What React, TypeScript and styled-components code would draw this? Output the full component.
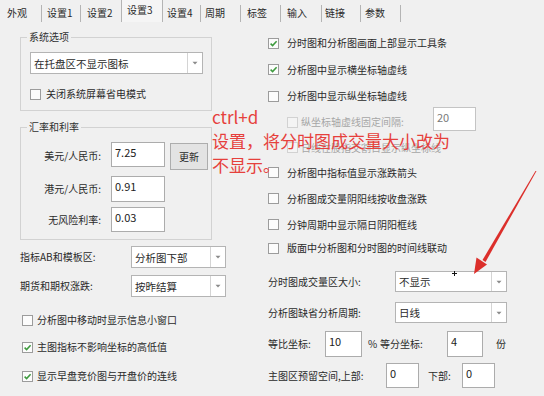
import React from 'react';
import styled, { createGlobalStyle } from 'styled-components';

const Global = createGlobalStyle`
  html, body { margin: 0; padding: 0; background: #f0f0f0; }
  body { font-family: "Noto Sans CJK SC", "Noto Sans", sans-serif; }
`;

const Page = styled.div`
  position: relative;
  width: 544px;
  height: 396px;
  overflow: hidden;
  background: #f0f0f0;
  color: #2a2a2a;
  font-size: 10px;
  font-family: "Noto Sans CJK SC", "Noto Sans", sans-serif;
`;

const TabBar = styled.div`
  display: flex;
  align-items: flex-end;
  height: 22px;
`;

const Tab = styled.div<{ $active?: boolean; $w: number; $sep?: boolean; $pl: number }>`
  box-sizing: border-box;
  width: ${p => p.$w}px;
  height: ${p => (p.$active ? 22 : 17)}px;
  padding-left: ${p => p.$pl}px;
  line-height: ${p => (p.$active ? 20 : 16)}px;
  border-right: ${p => (p.$sep === false ? 'none' : '1px solid #b4b4b4')};
  border-left: ${p => (p.$active ? '1px solid #b4b4b4' : 'none')};
  background: ${p => (p.$active ? '#f5f5f5' : 'transparent')};
  white-space: nowrap;
`;

const Body = styled.div`
  display: flex;
  gap: 42px;
`;

const LeftCol = styled.div`
  box-sizing: border-box;
  width: 226px;
  padding-left: 20px;
  display: flex;
  flex-direction: column;
`;

const RightCol = styled.div`
  flex: 1;
  display: flex;
  flex-direction: column;
`;

const Spacer = styled.div<{ $h: number }>`
  height: ${p => p.$h}px;
  flex: none;
`;

const Group = styled.fieldset<{ $mt: number; $pb: number }>`
  margin: ${p => p.$mt}px 0 0 0;
  padding: 0 0 ${p => p.$pb}px 0;
  width: 192px;
  box-sizing: border-box;
  border: 1px solid #d2d2d2;
  min-width: 0;
`;

const Legend = styled.legend`
  margin-left: 6px;
  padding: 0 2px;
  font-size: 10px;
  line-height: 12px;
  color: #303030;
`;

const Row = styled.div<{ $h: number; $mt?: number; $pl?: number; $gap?: number; $align?: string }>`
  display: flex;
  align-items: ${p => p.$align || 'center'};
  height: ${p => p.$h}px;
  margin-top: ${p => p.$mt || 0}px;
  padding-left: ${p => p.$pl || 0}px;
  gap: ${p => p.$gap || 0}px;
  flex: none;
`;

const Label = styled.div<{ $w?: number; $ml?: number; $right?: boolean; $dim?: boolean; $self?: string }>`
  ${p => (p.$w ? `width: ${p.$w}px;` : '')}
  margin-left: ${p => p.$ml || 0}px;
  text-align: ${p => (p.$right ? 'right' : 'left')};
  align-self: ${p => p.$self || 'auto'};
  flex: none;
  white-space: nowrap;
  color: ${p => (p.$dim ? '#a6a6a6' : '#2a2a2a')};
  line-height: 14px;
`;

const Box = styled.span<{ $disabled?: boolean }>`
  box-sizing: border-box;
  width: 11px;
  height: 11px;
  flex: none;
  border: 1px solid ${p => (p.$disabled ? '#d2d2d2' : '#9c9c9c')};
  background: ${p => (p.$disabled ? '#f4f4f4' : '#fcfcfc')};
  display: inline-flex;
  align-items: center;
  justify-content: center;
`;

const SelectBox = styled.div<{ $w: number; $h: number }>`
  box-sizing: border-box;
  width: ${p => p.$w}px;
  height: ${p => p.$h}px;
  border: 1px solid #b4b4b4;
  background: #fff;
  display: flex;
  flex: none;
`;

const SelectText = styled.div`
  flex: 1;
  display: flex;
  align-items: center;
  padding-left: 3px;
  font-size: 10.5px;
  white-space: nowrap;
`;

const SelectArrow = styled.div`
  width: 14px;
  border-left: 1px solid #d4d4d4;
  display: flex;
  align-items: center;
  justify-content: center;
`;

const Field = styled.div<{ $w: number; $h: number; $mt?: number; $ml?: string; $mr?: number; $dim?: boolean }>`
  box-sizing: border-box;
  width: ${p => p.$w}px;
  height: ${p => p.$h}px;
  margin-top: ${p => p.$mt || 0}px;
  margin-left: ${p => p.$ml || '0'};
  margin-right: ${p => p.$mr || 0}px;
  border: 1px solid ${p => (p.$dim ? '#c4c4c4' : '#acacac')};
  background: #fff;
  padding: 2px 3px;
  font-size: 11px;
  line-height: 14px;
  flex: none;
  color: ${p => (p.$dim ? '#7a7a7a' : '#222')};
`;

const Button = styled.div`
  box-sizing: border-box;
  width: 38px;
  height: 27px;
  margin-top: 1px;
  margin-left: 5px;
  border: 1px solid #adadad;
  background: #e3e3e3;
  display: flex;
  align-items: center;
  justify-content: center;
  flex: none;
`;

const Note = styled.div`
  position: absolute;
  left: 212px;
  top: 105px;
  font-size: 17px;
  line-height: 24px;
  color: #e6403c;
  white-space: nowrap;
  z-index: 2;
`;

const Overlay = styled.svg<{ $l: number; $t: number }>`
  position: absolute;
  left: ${p => p.$l}px;
  top: ${p => p.$t}px;
  z-index: 3;
`;

const Check: React.FC<{ checked?: boolean; disabled?: boolean; label: string; h: number; pl?: number; gap?: number; children?: React.ReactNode }> = ({ checked, disabled, label, h, pl, gap = 8, children }) => (
  <Row $h={h} $pl={pl} $gap={gap}>
    <Box $disabled={disabled}>
      {checked && (
        <svg width="9" height="9" viewBox="0 0 9 9">
          <polyline points="1.6,4.6 3.6,6.6 7.6,2.2" fill="none" stroke="#3d9a3d" strokeWidth="1.5" />
        </svg>
      )}
    </Box>
    <Label $dim={disabled}>{label}</Label>
    {children}
  </Row>
);

const Select: React.FC<{ w: number; h: number; text: string }> = ({ w, h, text }) => (
  <SelectBox $w={w} $h={h}>
    <SelectText>{text}</SelectText>
    <SelectArrow>
      <svg width="6" height="4" viewBox="0 0 6 4">
        <path d="M0.5 0.8 L5.5 0.8 L3 3.4 Z" fill="#8a8a8a" />
      </svg>
    </SelectArrow>
  </SelectBox>
);

const tabs: { t: string; w: number; pl: number; active?: boolean; sep?: boolean }[] = [
  { t: '外观', w: 42, pl: 7 },
  { t: '设置1', w: 39, pl: 5 },
  { t: '设置2', w: 40, pl: 6, sep: false },
  { t: '设置3', w: 42, pl: 5, active: true },
  { t: '设置4', w: 38, pl: 4 },
  { t: '周期', w: 40, pl: 4 },
  { t: '标签', w: 40, pl: 6 },
  { t: '输入', w: 41, pl: 6 },
  { t: '链接', w: 39, pl: 3 },
  { t: '参数', w: 40, pl: 4 },
];

export default function App() {
  return (
    <Page>
      <Global />
      <TabBar>
        {tabs.map(tb => (
          <Tab key={tb.t} $w={tb.w} $pl={tb.pl} $active={tb.active} $sep={tb.sep}>
            {tb.t}
          </Tab>
        ))}
      </TabBar>
      <Body>
        <LeftCol>
          <Group $mt={9} $pb={6}>
            <Legend>系统选项</Legend>
            <Row $h={22} $mt={9} $pl={9}>
              <Select w={173} h={22} text="在托盘区不显示图标" />
            </Row>
            <Row $h={20} $mt={10} $pl={9} $gap={5}>
              <Box />
              <Label>关闭系统屏幕省电模式</Label>
            </Row>
          </Group>
          <Group $mt={10} $pb={7}>
            <Legend>汇率和利率</Legend>
            <Row $h={28} $mt={9} $gap={10} $align="flex-start">
              <Label $w={80} $right $self="center">美元/人民币:</Label>
              <Row $h={28} $align="flex-start">
                <Field $w={54} $h={25}>7.25</Field>
                <Button>更新</Button>
              </Row>
            </Row>
            <Row $h={26} $mt={6} $gap={10}>
              <Label $w={80} $right>港元/人民币:</Label>
              <Field $w={54} $h={26}>0.91</Field>
            </Row>
            <Row $h={25} $mt={5} $gap={10}>
              <Label $w={80} $right>无风险利率:</Label>
              <Field $w={54} $h={25}>0.03</Field>
            </Row>
          </Group>
          <Row $h={22} $mt={6}>
            <Label $w={111}>指标AB和模板区:</Label>
            <Select w={95} h={22} text="分析图下部" />
          </Row>
          <Row $h={22} $mt={7}>
            <Label $w={111}>期货和期权涨跌:</Label>
            <Select w={95} h={22} text="按昨结算" />
          </Row>
          <Spacer $h={13} />
          <Check h={20} pl={2} gap={4} label="分析图中移动时显示信息小窗口" />
          <Spacer $h={7} />
          <Check h={20} pl={2} gap={4} checked label="主图指标不影响坐标的高低值" />
          <Spacer $h={9} />
          <Check h={20} pl={2} gap={4} checked label="显示早盘竞价图与开盘价的连线" />
        </LeftCol>
        <RightCol>
          <Spacer $h={8} />
          <Check h={26} checked label="分时图和分析图画面上部显示工具条" />
          <Check h={27} checked label="分析图中显示横坐标轴虚线" />
          <Check h={26} label="分析图中显示纵坐标轴虚线" />
          <Check h={26} pl={19} gap={3} disabled label="纵坐标轴虚线固定间隔:">
            <Field $w={43} $h={24} $mt={-6} $ml="auto" $mr={68} $dim>20</Field>
          </Check>
          <Check h={25} pl={19} gap={3} disabled label="日线在股指交割日显示纵坐标线" />
          <Check h={25} label="分析图中指标值显示涨跌箭头" />
          <Check h={27} label="分析图成交量阴阳线按收盘涨跌" />
          <Check h={25} label="分钟周期中显示隔日阴阳框线" />
          <Check h={22} label="版面中分析图和分时图的时间线联动" />
          <Row $h={21} $mt={12}>
            <Label $w={127}>分时图成交量区大小:</Label>
            <Select w={112} h={21} text="不显示" />
          </Row>
          <Row $h={21} $mt={10}>
            <Label $w={127}>分析图缺省分析周期:</Label>
            <Select w={112} h={21} text="日线" />
          </Row>
          <Row $h={26} $mt={8}>
            <Label $w={57}>等比坐标:</Label>
            <Field $w={37} $h={26}>10</Field>
            <Label $w={11} $ml={6}>%</Label>
            <Label $w={67} $ml={1}>等分坐标:</Label>
            <Field $w={36} $h={26}>4</Field>
            <Label $ml={13}>份</Label>
          </Row>
          <Row $h={25} $mt={6}>
            <Label $w={118}>主图区预留空间,上部:</Label>
            <Field $w={33} $h={25}>0</Field>
            <Label $w={34} $ml={9}>下部:</Label>
            <Field $w={33} $h={25}>0</Field>
          </Row>
        </RightCol>
      </Body>
      <Note>
        ctrl+d
        <br />
        设置，将分时图成交量大小改为
        <br />
        不显示。
      </Note>
      <Overlay $l={460} $t={165} width="84" height="115" viewBox="0 0 84 115">
        <polygon points="76.5,6 75.5,6 22.5,95 25.5,97" fill="#dc2f2b" />
        <polygon points="14,109 16.5,92.5 27,99.5" fill="#dc2f2b" />
      </Overlay>
      <Overlay $l={451} $t={270} width="7" height="7" viewBox="0 0 7 7">
        <path d="M3.5 1 V6 M1 3.5 H6" stroke="#111" strokeWidth="1" />
      </Overlay>
    </Page>
  );
}
